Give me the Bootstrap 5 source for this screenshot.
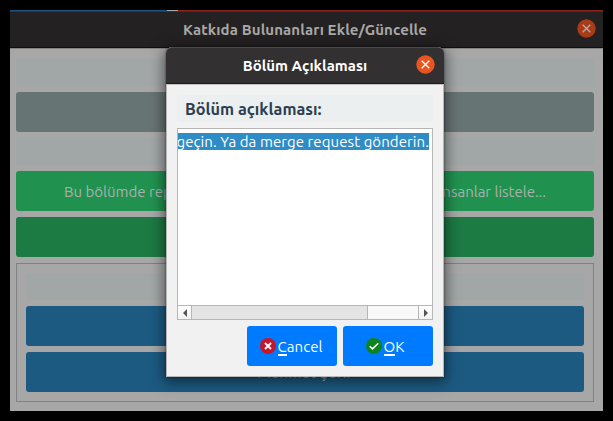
<!DOCTYPE html>
<html lang="tr">
<head>
<meta charset="utf-8">
<meta name="viewport" content="width=device-width, initial-scale=1">
<title>Katkıda Bulunanları Ekle/Güncelle</title>
<link rel="stylesheet" href="https://cdn.jsdelivr.net/npm/bootstrap@5.3.0/dist/css/bootstrap.min.css">
<style>
body{background:#000;font-family:Ubuntu,"Noto Sans","Open Sans",sans-serif;font-size:15px;line-height:20px;height:421px;overflow:hidden;padding:10px}
.main-win{width:593px;height:401px;background:#a7a7a7}
.strip{height:1px;background:linear-gradient(90deg,#1e5580 157px,#a5a5a5 157px 168px,#8b2018 168px)}
.main-title{height:38px;background:#232122;border-top:1px solid #353334;border-bottom:1px solid #858585;box-shadow:inset 0 -1px #110e10;color:#aaa8a5;font-weight:700;font-size:15px;padding-right:3px}
.main-title span{letter-spacing:.12px}
.close-main{right:7px;top:7px}
.main-body{padding:10px 9px 9px 6px;gap:6px}
.cap{height:27px;background:#a1a6a7;border-radius:3px;flex:none}
.bar{height:40px;border-radius:3px;border:0;padding:0;flex:none;color:#a9b1ab}
.bar-gray{background:#667473}
.bar-green{background:#219150;padding:2px 48px 0 48px}
.bar-dark{background:#1c7a43}
.bar-blue{background:#1c5a82;color:#a4abb0;padding-top:2px;letter-spacing:.3px}
.group{height:139px;border:1px solid #818181;padding:9px;gap:6px}
.dlg{left:166px;top:47px;width:278px;height:330px;background:#f1f1f1;border-radius:6px 6px 0 0;box-shadow:0 3px 14px 2px rgba(0,0,0,.5),0 0 2px rgba(0,0,0,.6)}
.dlg-title{height:37px;background:#333031;border-top:1px solid #4a4848;border-bottom:1px solid #1c1a1b;border-radius:6px 6px 0 0;color:#fff;font-weight:700;font-size:15px}
.close-dlg{right:9px;top:7px}
.dlg-body{height:293px;border:1px solid #b7b7b7;border-top-color:#c4c4c4;padding:10px}
.dlg-label{height:27px;background:#ebeff0;border-radius:3px;color:#2c3e50;font-weight:700;font-size:16.3px;padding-left:8px}
.editor{height:192px;margin-top:6px;background:#fff;border:1px solid #b6b6b6}
.sel{height:17px;width:251px;margin-top:4px;background:#308cc6;color:#fff;line-height:17px;overflow:hidden;letter-spacing:.08px}
.scroller{height:14px;border-top:1px solid #b6b6b6;background:#f8f8f8}
.arrow{width:14px;background:linear-gradient(#fff,#f2f2f2)}
.arrow-start{width:13px}
.arrow-end{border-left:1px solid #b6b6b6}
.thumb{width:177px;background:#e4e4e4;border:solid #b6b6b6;border-width:0 1px}
.actions{gap:6px;margin-top:6px}
.act{width:90px;height:40px;border:0;border-radius:3px;background:#007bff;color:#fff;padding:0 2px 0 0;font-size:15px;gap:2px}
.act-ok{padding-right:6px}
.act:hover{background:#007bff;color:#fff}
.act-text{padding-top:2px;letter-spacing:.05px}
.key{border-bottom:2px solid #fff;display:inline-block;line-height:14px}
</style>
<script src="https://cdn.jsdelivr.net/npm/bootstrap@5.3.0/dist/js/bootstrap.bundle.min.js"></script>
</head>
<body>
<main class="main-win d-flex flex-column">
  <div class="strip"></div>
  <header class="main-title position-relative d-flex align-items-center justify-content-center">
    <span>Katkıda Bulunanları Ekle/Güncelle</span>
    <svg class="close-main position-absolute" width="19" height="19" viewBox="0 0 19 19"><circle cx="9.5" cy="9.5" r="9.2" fill="#a93c18"/><path d="M5.7 5.7l7.6 7.6M13.3 5.7l-7.6 7.6" stroke="#b5aca7" stroke-width="1.3"/></svg>
  </header>
  <section class="main-body d-flex flex-column flex-grow-1">
    <div class="cap"></div>
    <div class="bar bar-gray"></div>
    <div class="cap"></div>
    <div class="bar bar-green d-flex align-items-center justify-content-between"><span>Bu bölümde rep</span><span>insanlar listele...</span></div>
    <div class="bar bar-dark"></div>
    <div class="group d-flex flex-column">
      <div class="cap"></div>
      <div class="bar bar-blue"></div>
      <div class="bar bar-blue d-flex align-items-center justify-content-center">Mehmet Şerif</div>
    </div>
  </section>
</main>
<div class="dlg position-absolute" role="dialog">
  <header class="dlg-title position-relative d-flex align-items-center justify-content-center">
    <span>Bölüm Açıklaması</span>
    <svg class="close-dlg position-absolute" width="19" height="19" viewBox="0 0 19 19"><circle cx="9.5" cy="9.5" r="9.2" fill="#e95420"/><path d="M5.7 5.7l7.6 7.6M13.3 5.7l-7.6 7.6" stroke="#fff" stroke-width="1.3"/></svg>
  </header>
  <section class="dlg-body">
    <div class="dlg-label d-flex align-items-center"><span>Bölüm açıklaması:</span></div>
    <div class="editor d-flex flex-column">
      <div class="sel d-flex justify-content-end text-nowrap"><span>geçin. Ya da merge request gönderin.</span></div>
      <div class="scroller d-flex mt-auto">
        <div class="arrow arrow-start d-flex align-items-center justify-content-center"><svg width="6" height="8"><path d="M5 0v8L1 4z" fill="#555"/></svg></div>
        <div class="thumb"></div>
        <div class="flex-grow-1"></div>
        <div class="arrow arrow-end d-flex align-items-center justify-content-center"><svg width="6" height="8"><path d="M1 0v8l4-4z" fill="#555"/></svg></div>
      </div>
    </div>
    <div class="actions d-flex justify-content-end">
      <button class="btn act d-flex align-items-center justify-content-center"><svg width="16" height="16"><circle cx="8" cy="8" r="8" fill="#c7162b"/><path d="M5 5l6 6M11 5l-6 6" stroke="#fff" stroke-width="1.9"/></svg><span class="act-text"><span class="key">C</span>ancel</span></button>
      <button class="btn act act-ok d-flex align-items-center justify-content-center"><svg width="16" height="16"><circle cx="8" cy="8" r="8" fill="#0e8420"/><path d="M3.7 8.2l2.8 2.7 5.8-5.7" fill="none" stroke="#fff" stroke-width="1.5"/></svg><span class="act-text"><span class="key">O</span>K</span></button>
    </div>
  </section>
</div>
</body>
</html>
